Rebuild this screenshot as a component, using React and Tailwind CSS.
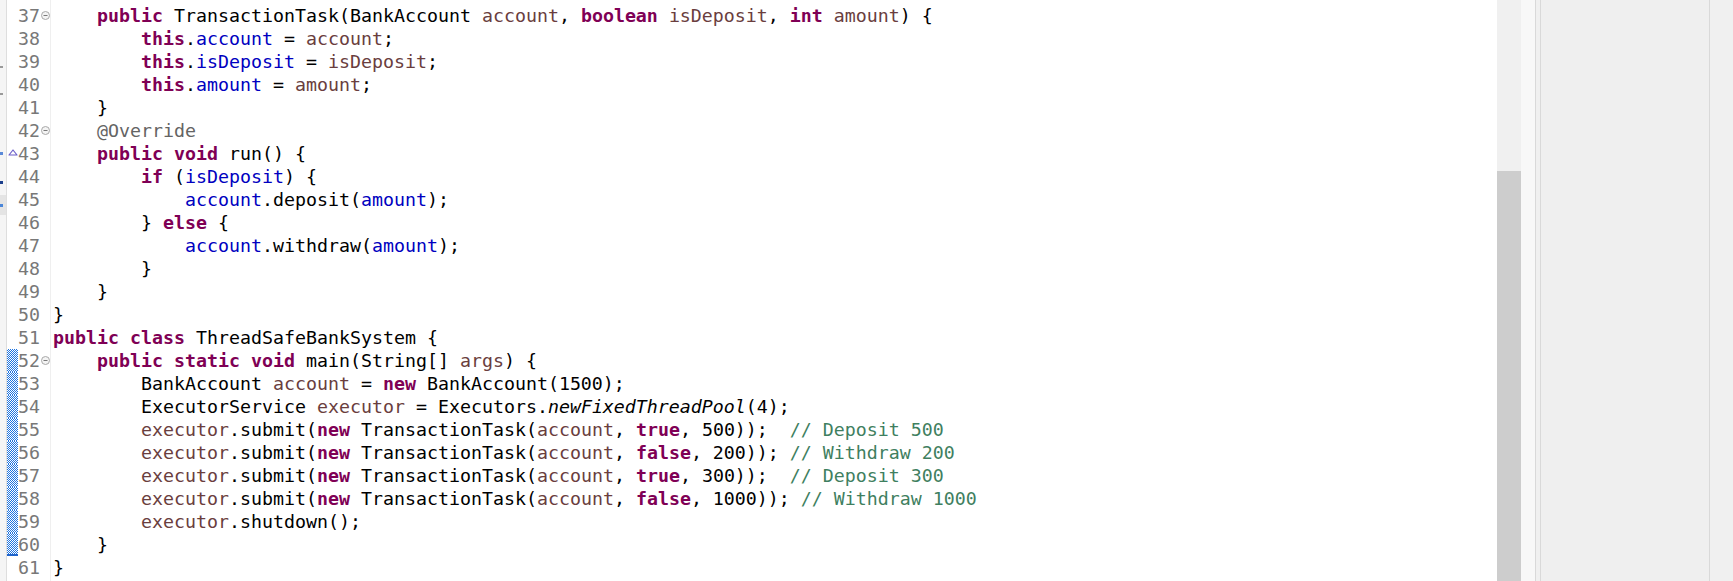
import React from 'react';

// token kinds -> eclipse default colours
const K = 'text-[#7f0055] font-bold'; // keyword
const F = 'text-[#0000c0]'; // field
const V = 'text-[#6a3e3e]'; // local / param
const C = 'text-[#3f7f5f]'; // comment
const A = 'text-[#646464]'; // annotation
const I = 'italic'; // static method
const D = ''; // default

const lines = [
  [37, [['    '], ['public', K], [' TransactionTask(BankAccount '], ['account', V], [', '], ['boolean', K], [' '], ['isDeposit', V], [', '], ['int', K], [' '], ['amount', V], [') {']]],
  [38, [['        '], ['this', K], ['.'], ['account', F], [' = '], ['account', V], [';']]],
  [39, [['        '], ['this', K], ['.'], ['isDeposit', F], [' = '], ['isDeposit', V], [';']]],
  [40, [['        '], ['this', K], ['.'], ['amount', F], [' = '], ['amount', V], [';']]],
  [41, [['    }']]],
  [42, [['    '], ['@Override', A]]],
  [43, [['    '], ['public', K], [' '], ['void', K], [' run() {']]],
  [44, [['        '], ['if', K], [' ('], ['isDeposit', F], [') {']]],
  [45, [['            '], ['account', F], ['.deposit('], ['amount', F], [');']]],
  [46, [['        } '], ['else', K], [' {']]],
  [47, [['            '], ['account', F], ['.withdraw('], ['amount', F], [');']]],
  [48, [['        }']]],
  [49, [['    }']]],
  [50, [['}']]],
  [51, [['public', K], [' '], ['class', K], [' ThreadSafeBankSystem {']]],
  [52, [['    '], ['public', K], [' '], ['static', K], [' '], ['void', K], [' main(String[] '], ['args', V], [') {']]],
  [53, [['        BankAccount '], ['account', V], [' = '], ['new', K], [' BankAccount(1500);']]],
  [54, [['        ExecutorService '], ['executor', V], [' = Executors.'], ['newFixedThreadPool', I], ['(4);']]],
  [55, [['        '], ['executor', V], ['.submit('], ['new', K], [' TransactionTask('], ['account', V], [', '], ['true', K], [', 500));  '], ['// Deposit 500', C]]],
  [56, [['        '], ['executor', V], ['.submit('], ['new', K], [' TransactionTask('], ['account', V], [', '], ['false', K], [', 200)); '], ['// Withdraw 200', C]]],
  [57, [['        '], ['executor', V], ['.submit('], ['new', K], [' TransactionTask('], ['account', V], [', '], ['true', K], [', 300));  '], ['// Deposit 300', C]]],
  [58, [['        '], ['executor', V], ['.submit('], ['new', K], [' TransactionTask('], ['account', V], [', '], ['false', K], [', 1000)); '], ['// Withdraw 1000', C]]],
  [59, [['        '], ['executor', V], ['.shutdown();']]],
  [60, [['    }']]],
  [61, [['}']]],
];

const folds = [37, 42, 52];

const FoldIcon = () => (
  <svg width="9" height="9" viewBox="0 0 9 9">
    <circle cx="4.5" cy="4.5" r="4" fill="#f4f4f4" stroke="#a8a8a8" strokeWidth="1" />
    <line x1="2.5" y1="4.5" x2="6.5" y2="4.5" stroke="#7a7a7a" strokeWidth="1" />
  </svg>
);

const OverrideIcon = () => (
  <svg width="10" height="7" viewBox="0 0 10 7">
    <path d="M1 6 L5 1 L9 6 Z" fill="#ffffff" stroke="#6d5fc9" strokeWidth="1.2" strokeLinejoin="round" />
  </svg>
);

const GutterRow = ({ n }) => {
  const changed = n >= 52 && n <= 60;
  return (
    <div className="flex h-[23px] items-center">
      <div
        className={
          'w-[11px] h-full flex items-center justify-center ' +
          (changed ? 'bg-[repeating-conic-gradient(#1f74e0_0%_25%,#ffffff_0%_50%)] bg-[length:2px_2px] ' : '') +
          (n === 60 ? 'border-b-2 border-[#1f64cc]' : '')
        }
      >
        {n === 43 && <span className="-mt-[3px] flex"><OverrideIcon /></span>}
      </div>
      <div className="w-[22px] text-right text-[#787878]">{n}</div>
      <div className="w-[10px] flex items-center justify-center">{folds.includes(n) && <FoldIcon />}</div>
    </div>
  );
};

export default function App() {
  return (
    <div className="flex h-[581px] w-[1733px] overflow-hidden bg-white font-['DejaVu_Sans_Mono',monospace] text-[18.27px] leading-[23px]">
      {/* cut-off panel on the far left */}
      <div className="w-[7px] shrink-0 bg-[#f5f5f5] border-r border-[#dedede] flex flex-col">
        <div className="h-[66px]" />
        <div className="h-[2px] w-[3px] bg-[#9a9a9a]" />
        <div className="h-[25px]" />
        <div className="h-[2px] w-[3px] bg-[#9a9a9a]" />
        <div className="h-[57px]" />
        <div className="h-[3px] w-[3px] bg-[#5a8ad8]" />
        <div className="h-[26px]" />
        <div className="h-[3px] w-[3px] bg-[#1c3f8c]" />
        <div className="h-[11px]" />
        <div className="h-[20px] w-[6px] bg-[#e4e4e4] flex flex-col justify-center">
          <div className="h-[3px] w-[3px] bg-[#4a86d8]" />
        </div>
      </div>

      {/* ruler + line numbers */}
      <div className="w-[44px] shrink-0 border-r border-[#efefef] pt-[4px] bg-white">
        {lines.map(([n]) => (
          <GutterRow key={n} n={n} />
        ))}
      </div>

      {/* code */}
      <div className="flex-1 pl-[2px] pt-[4px] text-black whitespace-pre">
        {lines.map(([n, toks]) => (
          <div key={n} className="h-[23px]">
            {toks.map(([t, cls], i) => (
              <span key={i} className={cls || D}>
                {t}
              </span>
            ))}
          </div>
        ))}
      </div>

      {/* vertical scrollbar */}
      <div className="w-[24px] shrink-0 bg-[#f0f0f0] flex flex-col">
        <div className="h-[171px]" />
        <div className="flex-1 bg-[#cdcdcd]" />
      </div>

      {/* right side panels */}
      <div className="w-[15px] shrink-0 bg-[#f8f8f8] border-r border-[#d9d9d9]" />
      <div className="w-[5px] shrink-0 bg-[#f0f0f0] border-r border-[#d9d9d9]" />
      <div className="w-[169px] shrink-0 bg-[#efefef] border-r border-[#d9d9d9]" />
      <div className="w-[23px] shrink-0 bg-[#f0f0f0]" />
    </div>
  );
}
